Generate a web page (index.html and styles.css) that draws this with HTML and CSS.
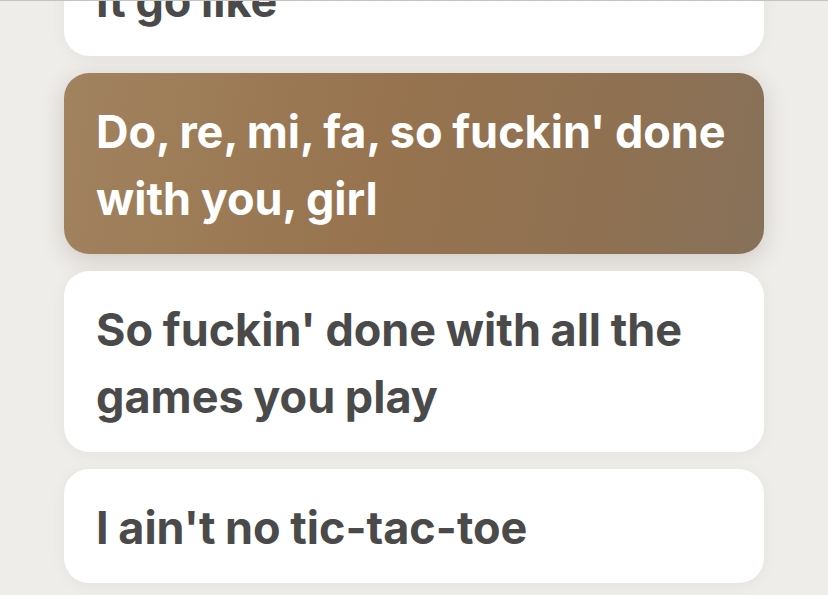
FILE: index.html
```html
<!DOCTYPE html>
<html lang="en">
<head>
<meta charset="utf-8">
<title>Lyrics</title>
<link rel="stylesheet" href="styles.css">
</head>
<body>
<div class="topline"></div>
<main class="lyrics">
  <div class="line">It go like</div>
  <div class="line active">Do, re, mi, fa, so fuckin' done with you, girl</div>
  <div class="line">So fuckin' done with all the games you play</div>
  <div class="line">I ain't no tic-tac-toe</div>
</main>
</body>
</html>
```
FILE: styles.css
```css
html, body {
  margin: 0;
  padding: 0;
  height: 100%;
  overflow: hidden;
}
body {
  background: #efedea;
  font-family: Inter, "Noto Sans", "Liberation Sans", sans-serif;
}
.topline {
  height: 1px;
  background: #c4c3c1;
  position: relative;
  z-index: 2;
}
.lyrics {
  display: flex;
  flex-direction: column;
  gap: 17px;
  margin: -59px 64px 0;
}
.line {
  background: #ffffff;
  border-radius: 25px;
  padding: 25px 30px 22px 32px;
  font-size: 45px;
  line-height: 67px;
  font-weight: 700;
  letter-spacing: 0;
  word-spacing: -1px;
  color: #4a4a4a;
  box-shadow: 0 2px 14px rgba(120, 110, 100, 0.08);
}
.line.active {
  color: #ffffff;
  background: linear-gradient(100deg, #a2835f 0%, #97734f 45%, #8e7152 80%, #87715a 100%);
  box-shadow: 0 6px 24px rgba(60, 50, 40, 0.18);
}
```
